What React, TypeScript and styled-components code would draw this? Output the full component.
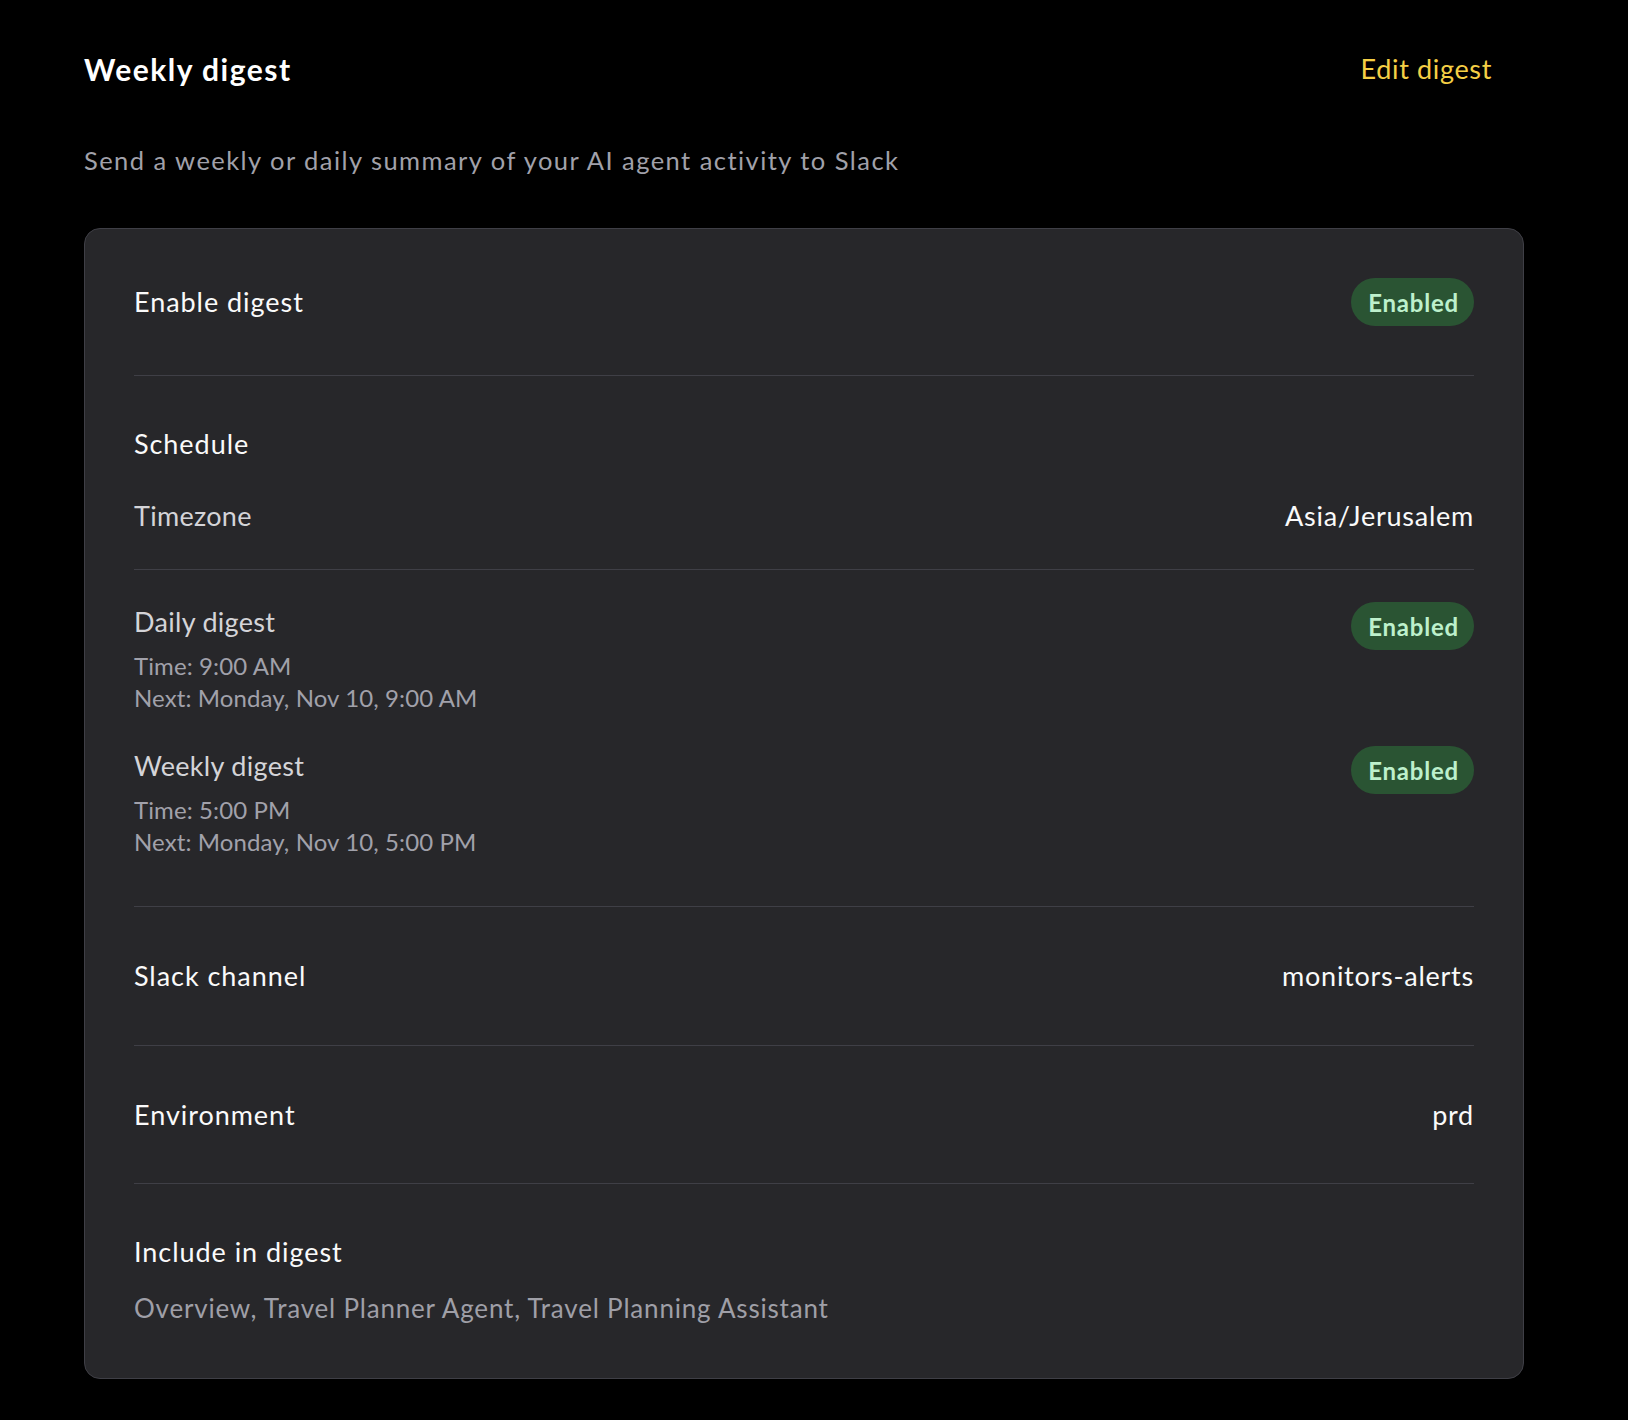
import { createGlobalStyle, styled } from 'styled-components';

const GlobalStyle = createGlobalStyle`
    * {
        box-sizing: border-box;
    }
    body {
        margin: 0;
        background: #000000;
        font-family: "Lato", "Noto Sans", sans-serif;
        color: #fafafa;
    }
`;

const Page = styled.main`
    min-height: 1420px;
    padding: 49px 104px 40px 84px;
    background: #000000;
`;

const Header = styled.header`
    display: flex;
    justify-content: space-between;
    align-items: center;
    padding-right: 32px;
`;

const Title = styled.h2`
    margin: 0;
    font-size: 30px;
    line-height: 40px;
    font-weight: 700;
    letter-spacing: 1.5px;
    color: #ffffff;
`;

const EditLink = styled.button`
    border: none;
    background: none;
    padding: 0;
    font-family: inherit;
    font-size: 27px;
    line-height: 40px;
    letter-spacing: 0.65px;
    color: #f5cf45;
    cursor: pointer;
`;

const Description = styled.p`
    margin: 53px 0 0;
    font-size: 25.5px;
    line-height: 36px;
    letter-spacing: 1.45px;
    color: #a1a1aa;
`;

const Card = styled.section`
    margin-top: 50px;
    padding: 0 49px 0 49px;
    background: #27272a;
    border: 1px solid #3f3f46;
    border-radius: 16px;
`;

const Block = styled.div<{ $top?: number; $bottom?: number }>`
    padding: ${(p) => p.$top ?? 48}px 0 ${(p) => p.$bottom ?? 49}px;
    & + & {
        border-top: 1px solid #3f3f46;
    }
`;

const Row = styled.div<{ $align?: string }>`
    display: flex;
    justify-content: space-between;
    align-items: ${(p) => p.$align ?? 'center'};
    gap: 24px;
`;

const Label = styled.span`
    font-size: 27px;
    line-height: 40px;
    letter-spacing: 0.95px;
    color: #fafafa;
`;

const Value = styled.span`
    font-size: 27px;
    line-height: 40px;
    letter-spacing: 0.75px;
    color: #fafafa;
`;

const SubLabel = styled.span`
    font-size: 27px;
    line-height: 40px;
    letter-spacing: 0.3px;
    color: #d4d4d8;
`;

const Badge = styled.span`
    display: inline-flex;
    align-items: center;
    justify-content: center;
    height: 48px;
    padding: 0 15px 0 17px;
    border-radius: 24px;
    background: #2a5433;
    color: #bdf0cc;
    font-size: 24px;
    font-weight: 700;
    letter-spacing: 0.8px;
`;

const Stack = styled.div<{ $gap?: number }>`
    display: flex;
    flex-direction: column;
    gap: ${(p) => p.$gap ?? 0}px;
`;

const Meta = styled.div`
    display: flex;
    flex-direction: column;
    margin-top: 8px;
    font-size: 24px;
    line-height: 32px;
    letter-spacing: 0.1px;
    color: #a1a1aa;
`;

const Muted = styled.span`
    font-size: 26px;
    line-height: 40px;
    letter-spacing: 0.8px;
    color: #9f9fa7;
`;

const digests = [
    { name: 'Daily digest', time: '9:00 AM', next: 'Monday, Nov 10, 9:00 AM' },
    { name: 'Weekly digest', time: '5:00 PM', next: 'Monday, Nov 10, 5:00 PM' },
];

export default function App() {
    return (
        <>
            <GlobalStyle />
            <Page>
                <Header>
                    <Title>Weekly digest</Title>
                    <EditLink>Edit digest</EditLink>
                </Header>
                <Description>Send a weekly or daily summary of your AI agent activity to Slack</Description>

                <Card>
                    <Block $top={49}>
                        <Row>
                            <Label>Enable digest</Label>
                            <Badge>Enabled</Badge>
                        </Row>
                    </Block>

                    <Block $bottom={33}>
                        <Stack $gap={32}>
                            <Label>Schedule</Label>
                            <Row>
                                <SubLabel>Timezone</SubLabel>
                                <Value>Asia/Jerusalem</Value>
                            </Row>
                        </Stack>
                    </Block>

                    <Block $top={32} $bottom={48}>
                        <Stack $gap={32}>
                            {digests.map((d) => (
                                <Row key={d.name} $align="flex-start">
                                    <div>
                                        <SubLabel>{d.name}</SubLabel>
                                        <Meta>
                                            <span>Time: {d.time}</span>
                                            <span>Next: {d.next}</span>
                                        </Meta>
                                    </div>
                                    <Badge>Enabled</Badge>
                                </Row>
                            ))}
                        </Stack>
                    </Block>

                    <Block $top={49}>
                        <Row>
                            <Label>Slack channel</Label>
                            <Value>monitors-alerts</Value>
                        </Row>
                    </Block>

                    <Block $top={49} $bottom={48}>
                        <Row>
                            <Label>Environment</Label>
                            <Value>prd</Value>
                        </Row>
                    </Block>

                    <Block $top={48} $bottom={50}>
                        <Stack $gap={16}>
                            <Label>Include in digest</Label>
                            <Muted>Overview, Travel Planner Agent, Travel Planning Assistant</Muted>
                        </Stack>
                    </Block>
                </Card>
            </Page>
        </>
    );
}
